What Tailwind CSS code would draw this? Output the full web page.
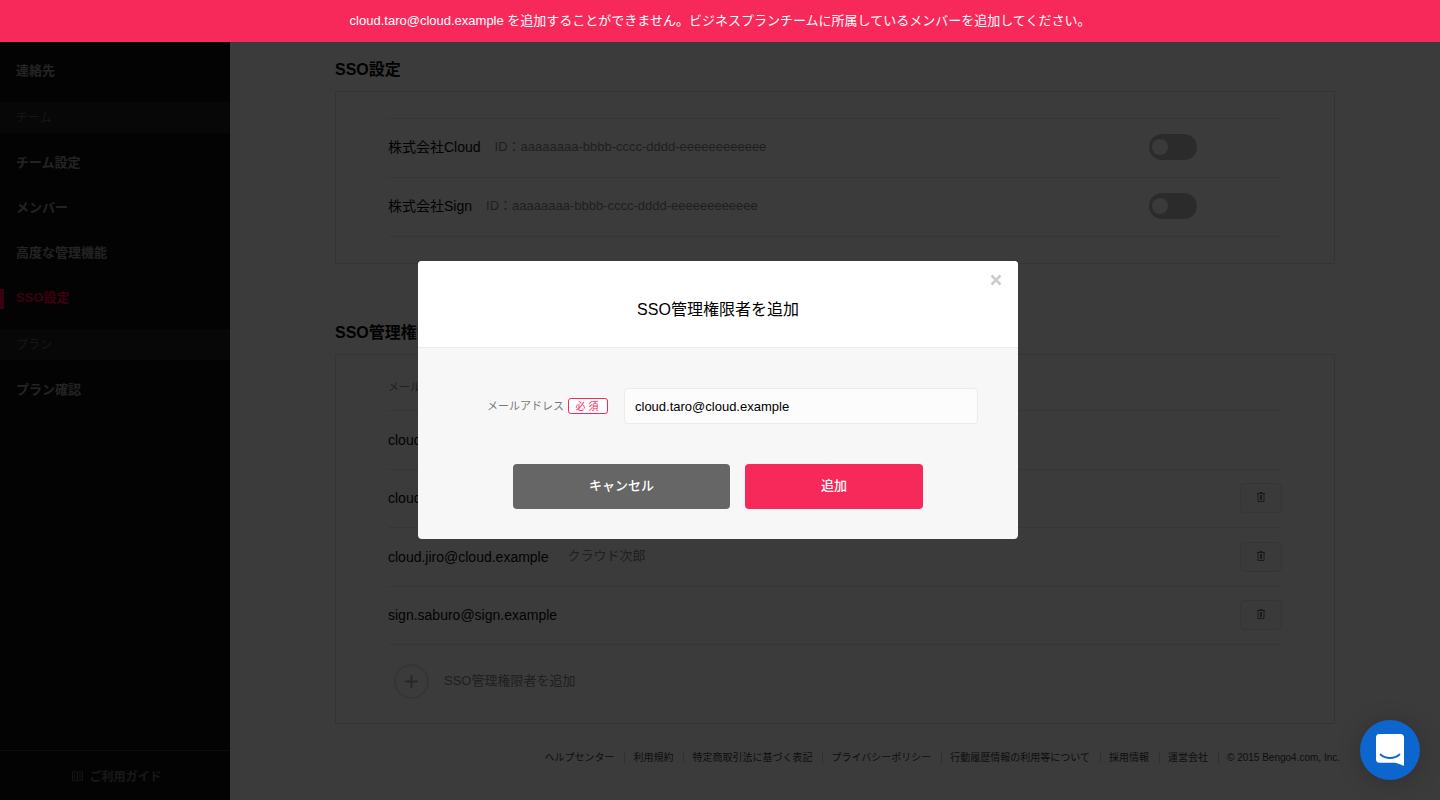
<!DOCTYPE html>
<html lang="ja">
<head>
  <meta charset="UTF-8" />
  <meta name="viewport" content="width=device-width, initial-scale=1.0" />
  <title>SSO設定</title>
  <script src="https://cdn.jsdelivr.net/npm/@tailwindcss/browser@4"></script>
</head>
<body class="min-h-screen flex flex-col bg-[#fdfdfd] text-[#0a0a0a] text-sm font-['Liberation_Sans','Noto_Sans_CJK_JP',sans-serif]">
  <!-- Alert -->
  <div role="alert" class="relative z-30 h-[42px] flex items-center justify-center bg-[#f7295a] text-white text-[13px] leading-5">
    <p>cloud.taro@cloud.example を追加することができません。ビジネスプランチームに所属しているメンバーを追加してください。</p>
  </div>

  <div class="grow flex">
    <!-- Sidebar -->
    <aside class="w-[230px] shrink-0 flex flex-col bg-[#111] text-[#999] text-[13px] font-bold">
      <nav class="grow pt-[7px]">
        <ul class="pb-2">
          <li><a href="#" class="h-[45px] px-4 flex items-center">連絡先</a></li>
        </ul>
        <p class="h-[31px] px-4 flex items-center bg-[#1e1e1e] text-[#606060] text-xs font-normal">チーム</p>
        <ul class="py-2">
          <li><a href="#" class="h-[45px] px-4 flex items-center">チーム設定</a></li>
          <li><a href="#" class="h-[45px] px-4 flex items-center">メンバー</a></li>
          <li><a href="#" class="h-[45px] px-4 flex items-center">高度な管理機能</a></li>
          <li><a href="#" aria-current="page" class="h-[45px] pr-4 flex items-center gap-3 text-[#f50046]"><span class="w-1 h-5 bg-[#f50046]"></span>SSO設定</a></li>
        </ul>
        <p class="h-[31px] px-4 flex items-center bg-[#1e1e1e] text-[#606060] text-xs font-normal">プラン</p>
        <ul class="py-2">
          <li><a href="#" class="h-[45px] px-4 flex items-center">プラン確認</a></li>
        </ul>
      </nav>
      <a href="#" class="h-[50px] pt-0.5 pl-1 border-t border-[#3a3a3a] flex items-center justify-center gap-1.5 text-[#6a6a6a] text-xs">
        <svg class="w-[11px] h-[11px]" viewBox="0 0 11 11" fill="none" stroke="currentColor" stroke-width=".8" aria-hidden="true">
          <path d="M5.500 1.500C4.300.6 2.500.5.500.8v8.700c2-.3 3.800-.2 5 .7 1.200-.9 3-1 5-.7V.8c-2-.3-3.800-.2-5 .7zM5.500 1.500v8.700M2 3h2M2 5h2M2 7h2M7 3h2M7 5h2M7 7h2" />
        </svg>
        ご利用ガイド
      </a>
    </aside>

    <!-- Content -->
    <div class="grow flex flex-col">
      <main class="w-full max-w-[1000px] mx-auto pt-4">
        <section>
          <h2 class="mb-[9px] text-base font-bold">SSO設定</h2>
          <div class="border border-[#dedede] px-[52px] py-[26px]">
            <ul class="border-t border-[#e8e8e8]">
              <li class="h-[59px] border-b border-[#e8e8e8] flex items-center pr-[85px] pb-0.5">
                <span>株式会社Cloud</span>
                <span class="ml-3.5 text-[13px] text-[#888]">ID：aaaaaaaa-bbbb-cccc-dddd-eeeeeeeeeeee</span>
                <input type="checkbox" role="switch" aria-label="株式会社Cloud" class="appearance-none ml-auto w-12 h-[26px] px-[3px] flex items-center rounded-full bg-[#bbb] before:size-4 before:rounded-full before:bg-[#f8f8f8] checked:justify-end" />
              </li>
              <li class="h-[59px] border-b border-[#e8e8e8] flex items-center pr-[85px] pb-0.5">
                <span>株式会社Sign</span>
                <span class="ml-3.5 text-[13px] text-[#888]">ID：aaaaaaaa-bbbb-cccc-dddd-eeeeeeeeeeee</span>
                <input type="checkbox" role="switch" aria-label="株式会社Sign" class="appearance-none ml-auto w-12 h-[26px] px-[3px] flex items-center rounded-full bg-[#bbb] before:size-4 before:rounded-full before:bg-[#f8f8f8] checked:justify-end" />
              </li>
            </ul>
          </div>
        </section>

        <section class="mt-[57px]">
          <h2 class="mb-[9px] text-base font-bold">SSO管理権限者</h2>
          <div class="border border-[#dedede] px-[52px] pt-6 pb-6">
            <p class="border-b border-[#e8e8e8] pb-[15px] text-[11px] leading-4 text-[#888]">メールアドレス</p>
            <ul>
              <li class="odd:h-[59px] even:h-[58px] pb-px border-b border-[#e8e8e8] flex items-center">cloud.hanako@cloud.example</li>
              <li class="odd:h-[59px] even:h-[58px] pb-px border-b border-[#e8e8e8] flex items-center">
                <span>cloud.ichiro@cloud.example</span>
                <button type="button" aria-label="削除" class="ml-auto w-[42px] h-[30px] pb-0.5 flex items-center justify-center rounded border border-[#e4e4e4] bg-[#fafafa] text-[#707070]">
                  <svg class="w-2 h-2.5" viewBox="0 0 8 10" aria-hidden="true"><path fill="none" stroke="currentColor" d="M1 2v7.500h6V2" /><path fill="currentColor" d="M2.500 0h3v1H8v1H0V1h2.500zM3 3h2v5H3z" /></svg>
                </button>
              </li>
              <li class="odd:h-[59px] even:h-[58px] pb-px border-b border-[#e8e8e8] flex items-center">
                <span>cloud.jiro@cloud.example</span>
                <span class="ml-[19px] text-[13px] text-[#888]">クラウド次郎</span>
                <button type="button" aria-label="削除" class="ml-auto w-[42px] h-[30px] pb-0.5 flex items-center justify-center rounded border border-[#e4e4e4] bg-[#fafafa] text-[#707070]">
                  <svg class="w-2 h-2.5" viewBox="0 0 8 10" aria-hidden="true"><path fill="none" stroke="currentColor" d="M1 2v7.500h6V2" /><path fill="currentColor" d="M2.500 0h3v1H8v1H0V1h2.500zM3 3h2v5H3z" /></svg>
                </button>
              </li>
              <li class="odd:h-[59px] even:h-[58px] pb-px border-b border-[#e8e8e8] flex items-center">
                <span>sign.saburo@sign.example</span>
                <button type="button" aria-label="削除" class="ml-auto w-[42px] h-[30px] pb-0.5 flex items-center justify-center rounded border border-[#e4e4e4] bg-[#fafafa] text-[#707070]">
                  <svg class="w-2 h-2.5" viewBox="0 0 8 10" aria-hidden="true"><path fill="none" stroke="currentColor" d="M1 2v7.500h6V2" /><path fill="currentColor" d="M2.500 0h3v1H8v1H0V1h2.500zM3 3h2v5H3z" /></svg>
                </button>
              </li>
            </ul>
            <button type="button" class="mt-[19px] ml-1.5 flex items-center gap-[15px] text-[13px] text-[#888]">
              <span class="size-[35px] flex items-center justify-center rounded-full border-2 border-[#e4e4e4]">
                <svg class="size-[13px]" viewBox="0 0 13 13" fill="none" stroke="#aaa" stroke-width="2" stroke-linecap="round" aria-hidden="true"><path d="M6.500 1v11M1 6.500h11" /></svg>
              </span>
              SSO管理権限者を追加
            </button>
          </div>
        </section>
      </main>

      <footer class="mt-7 pr-[100px] text-[10px] leading-3 text-[#444]">
        <ul class="flex justify-end divide-x divide-[#d4d4d4]">
          <li class="pr-2.5"><a href="#">ヘルプセンター</a></li>
          <li class="pl-2 pr-2.5"><a href="#">利用規約</a></li>
          <li class="pl-2 pr-2.5"><a href="#">特定商取引法に基づく表記</a></li>
          <li class="pl-2 pr-2.5"><a href="#">プライバシーポリシー</a></li>
          <li class="pl-2 pr-2.5"><a href="#">行動履歴情報の利用等について</a></li>
          <li class="pl-2 pr-2.5"><a href="#">採用情報</a></li>
          <li class="pl-2 pr-2.5"><a href="#">運営会社</a></li>
          <li class="pl-2">© 2015 Bengo4.com, Inc.</li>
        </ul>
      </footer>
    </div>
  </div>

  <!-- Modal -->
  <div class="fixed inset-0 z-20 pr-1 flex items-center justify-center bg-black/77">
    <div role="dialog" aria-modal="true" aria-labelledby="modal-title" class="relative w-[600px] rounded bg-[#f7f7f7] text-black">
      <header class="h-[87px] pt-3 flex items-center justify-center rounded-t border-b border-[#ebebeb] bg-white">
        <h3 id="modal-title" class="text-base">SSO管理権限者を追加</h3>
      </header>
      <button type="button" aria-label="閉じる" class="absolute top-[11px] right-3.5 p-0.5 text-[#ccc]">
        <svg class="size-3" viewBox="0 0 12 12" fill="none" stroke="currentColor" stroke-width="2.500" aria-hidden="true"><path d="M1.500 1.500l9 9M10.500 1.500l-9 9" /></svg>
      </button>
      <form class="px-10 pt-10 pb-[30px]">
        <div class="flex items-center">
          <label for="email" class="w-[150px] flex items-center justify-end gap-1 text-[11px] leading-4 text-[#777]">
            メールアドレス
            <span class="w-10 h-4 pt-0.5 pr-0.5 flex items-center justify-center rounded-[3px] border border-[#f7295a] bg-white text-[10px] text-[#f7295a]">必 須</span>
          </label>
          <input id="email" type="email" value="cloud.taro@cloud.example" class="ml-4 grow h-9 px-2.5 rounded border border-[#ebebeb] bg-[#fcfcfc] text-[13px]" />
        </div>
        <div class="mt-10 flex justify-center gap-[15px] text-[13px] text-white font-medium">
          <button type="button" class="w-[217px] h-[45px] rounded bg-[#666]">キャンセル</button>
          <button type="submit" class="w-[178px] h-[45px] rounded bg-[#f7295a]">追加</button>
        </div>
      </form>
    </div>
  </div>

  <!-- Chat launcher -->
  <button type="button" aria-label="チャットを開く" class="fixed right-5 bottom-5 z-30 size-[60px] flex items-center justify-center rounded-full bg-[#0c66cd] shadow-[0_2px_24px_rgba(0,0,0,0.2)]">
    <svg class="w-7 h-8" viewBox="0 0 28 32" aria-hidden="true">
      <path fill="#fff" d="M28 32s-4.700-1.900-8.500-3.200H3.100C1.400 28.800 0 27.300 0 25.500V3.300C0 1.500 1.400 0 3.100 0h21.800C26.600 0 28 1.500 28 3.300z" />
      <path fill="none" stroke="#0c66cd" stroke-width="1.800" stroke-linecap="round" d="M4.500 20.500c2.700 2.300 6 3.500 9.500 3.500s6.800-1.200 9.500-3.500" />
    </svg>
  </button>
</body>
</html>
